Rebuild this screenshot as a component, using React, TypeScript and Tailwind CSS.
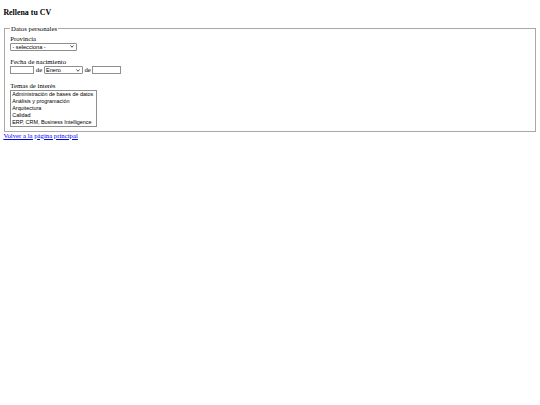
import React from "react";

function Chevron() {
  return (
    <svg width="4" height="3" viewBox="0 0 8 6" className="shrink-0">
      <path d="M1 1 L4 4.5 L7 1" fill="none" stroke="#222" strokeWidth="1.6" />
    </svg>
  );
}

function FakeSelect({ text, w }: { text: string; w: string }) {
  return (
    <div
      className={`${w} h-[8.2px] flex items-center justify-between border border-[#8f8f8f] rounded-[1px] bg-white pl-[1.2px] pr-[2px] font-['Liberation_Sans'] text-[5.6px] leading-[6px] text-black`}
    >
      <span className="whitespace-nowrap">{text}</span>
      <Chevron />
    </div>
  );
}

export default function App() {
  const temas = [
    "Administración de bases de datos",
    "Análisis y programación",
    "Arquitectura",
    "Calidad",
    "ERP, CRM, Business Intelligence",
  ];
  return (
    <div className="w-[540px] h-[405px] bg-white px-[3.4px] pt-px font-['Liberation_Serif',serif] text-[6.75px] leading-[7.8px] text-black">
      <h3 className="text-[7.9px] font-bold leading-[9.1px] mt-[6.9px] mb-[7.9px]">Rellena tu CV</h3>
      <form>
        <fieldset className="mx-[0.85px] border border-[#a8a8a8] px-[5px] pt-[2.4px] pb-[4px]">
          <legend className="px-[0.85px] leading-[7.8px]">Datos personales</legend>
          <div>Provincia</div>
          <FakeSelect text="- selecciona -" w="w-[67px]" />
          <div className="mt-[6.75px]">Fecha de nacimiento</div>
          <div className="flex items-center h-[8.9px]">
            <div className="w-[24px] h-[8.4px] border border-[#8f8f8f] bg-white" />
            <span className="mx-[1.6px]">de</span>
            <FakeSelect text="Enero" w="w-[39px]" />
            <span className="mx-[1.6px]">de</span>
            <div className="w-[29px] h-[8.4px] border border-[#8f8f8f] bg-white" />
          </div>
          <div className="mt-[7.6px]">Temas de interés</div>
          <div className="w-[87px] h-[37px] border border-[#8f8f8f] bg-white font-['Liberation_Sans',sans-serif] text-[5.4px] leading-[7px] overflow-hidden">
            {temas.map((t) => (
              <div key={t} className="pl-[1px] whitespace-nowrap">
                {t}
              </div>
            ))}
          </div>
        </fieldset>
      </form>
      <a href="#" className="text-[#0000ee] underline">
        Volver a la página principal
      </a>
    </div>
  );
}
